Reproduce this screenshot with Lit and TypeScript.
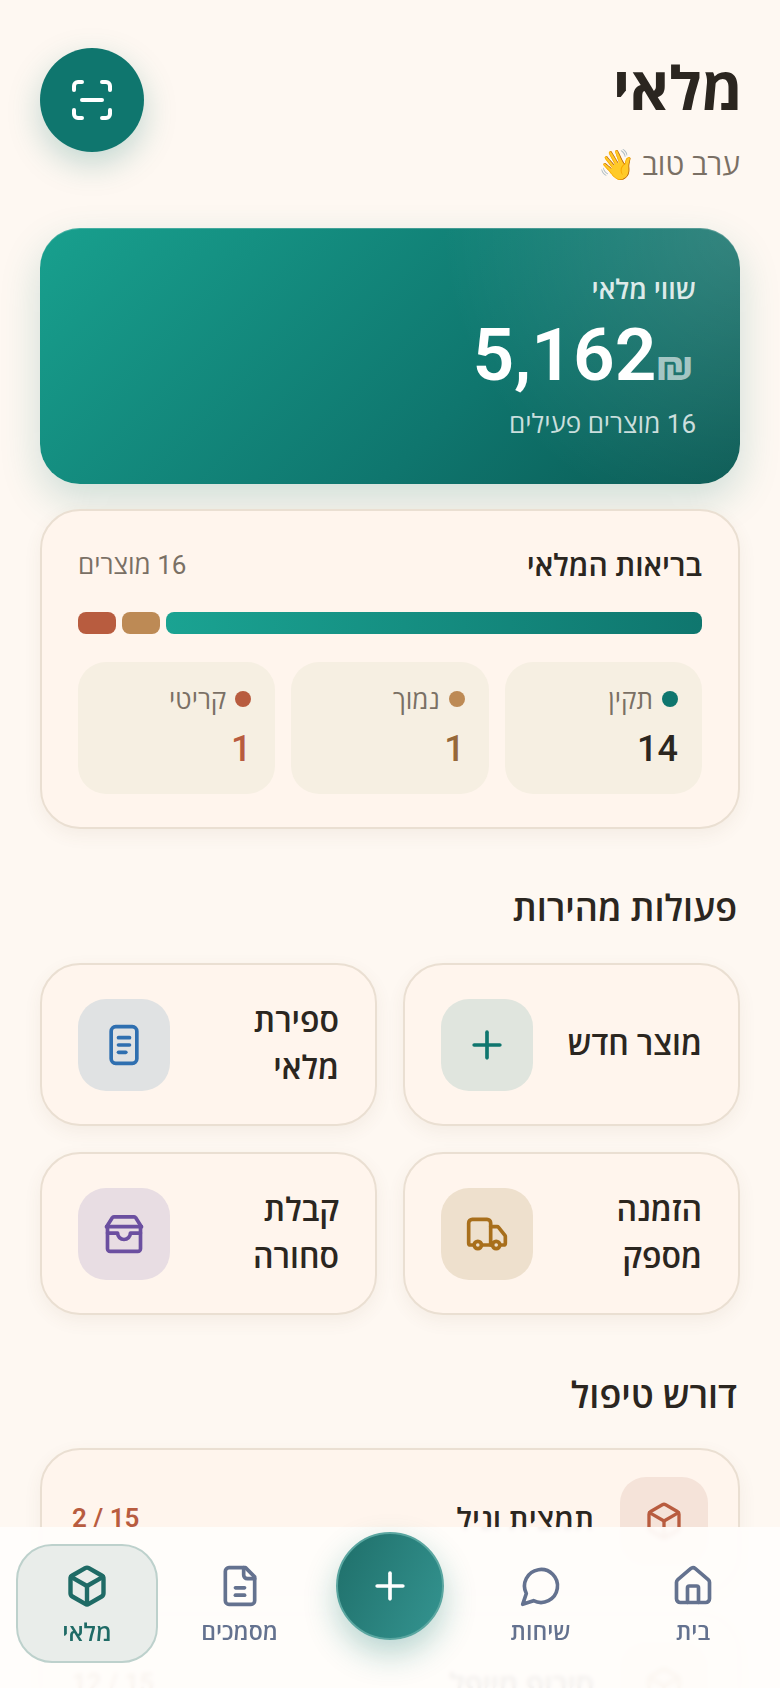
import { LitElement, html, css, svg } from "lit";
import { customElement } from "lit/decorators.js";

const icon = (body: unknown, size = 44, sw = 2) => html`<svg
  width=${size}
  height=${size}
  viewBox="0 0 24 24"
  fill="none"
  stroke="currentColor"
  stroke-width=${sw}
  stroke-linecap="round"
  stroke-linejoin="round"
>
  ${body}
</svg>`;

const paths = {
  scan: svg`<path d="M3 7V5a2 2 0 0 1 2-2h2"/><path d="M17 3h2a2 2 0 0 1 2 2v2"/><path d="M21 17v2a2 2 0 0 1-2 2h-2"/><path d="M7 21H5a2 2 0 0 1-2-2v-2"/><path d="M7 12h10"/>`,
  plus: svg`<path d="M5 12h14"/><path d="M12 5v14"/>`,
  list: svg`<rect x="5" y="2" width="14" height="20" rx="2.5"/><path d="M9 8h6"/><path d="M9 12h6"/><path d="M9 16h4"/>`,
  truck: svg`<path d="M14 18V6a2 2 0 0 0-2-2H4a2 2 0 0 0-2 2v11a1 1 0 0 0 1 1h2"/><path d="M15 18H9"/><path d="M19 18h2a1 1 0 0 0 1-1v-3.65a1 1 0 0 0-.22-.624l-3.48-4.35A1 1 0 0 0 17.52 8H14"/><circle cx="17" cy="18" r="2"/><circle cx="7" cy="18" r="2"/>`,
  inbox: svg`<path d="M2.5 8 5.6 3.2A1 1 0 0 1 6.5 2.7h11a1 1 0 0 1 .9.5L21.5 8"/><path d="M2.5 8h19"/><path d="M3 8v12a1.5 1.5 0 0 0 1.5 1.5h15A1.5 1.5 0 0 0 21 20V8"/><path d="M3 11.5h5.5a3.5 3.5 0 0 0 7 0H21"/>`,
  box: svg`<path d="M21 8a2 2 0 0 0-1-1.73l-7-4a2 2 0 0 0-2 0l-7 4A2 2 0 0 0 3 8v8a2 2 0 0 0 1 1.73l7 4a2 2 0 0 0 2 0l7-4A2 2 0 0 0 21 16Z"/><path d="m3.3 7 8.7 5 8.7-5"/><path d="M12 22V12"/>`,
  home: svg`<path d="M15 21v-8a1 1 0 0 0-1-1h-4a1 1 0 0 0-1 1v8"/><path d="M3 10a2 2 0 0 1 .709-1.528l7-6a2 2 0 0 1 2.582 0l7 6A2 2 0 0 1 21 10v9a2 2 0 0 1-2 2H5a2 2 0 0 1-2-2z"/>`,
  chat: svg`<path d="M7.9 20A9 9 0 1 0 4 16.1L2 22Z"/>`,
  file: svg`<path d="M15 2H6a2 2 0 0 0-2 2v16a2 2 0 0 0 2 2h12a2 2 0 0 0 2-2V7Z"/><path d="M14 2v4a2 2 0 0 0 2 2h4"/><path d="M9.5 13h5"/><path d="M9.5 17h5"/>`,
};

const stats = [
  { label: "תקין", value: "14", kind: "ok" },
  { label: "נמוך", value: "1", kind: "low" },
  { label: "קריטי", value: "1", kind: "crit" },
];

const actions = [
  { label: "מוצר חדש", icon: paths.plus, kind: "teal" },
  { label: "ספירת מלאי", icon: paths.list, kind: "blue" },
  { label: "הזמנה מספק", icon: paths.truck, kind: "amber" },
  { label: "קבלת סחורה", icon: paths.inbox, kind: "purple" },
];

const alerts = [
  { name: "תמצית וניל", stock: "2 / 15", kind: "crit" },
  { name: "סירופ מייפל", stock: "12 / 15", kind: "low" },
];

const tabs = [
  { label: "מלאי", icon: paths.box, active: true },
  { label: "מסמכים", icon: paths.file },
  { fab: true },
  { label: "שיחות", icon: paths.chat },
  { label: "בית", icon: paths.home },
];

@customElement("app-root")
export class AppRoot extends LitElement {
  static styles = css`
    :host {
      display: block;
      position: relative;
      height: 1688px;
      overflow: hidden;
      direction: rtl;
      background: #fef8f2;
      color: #2b2620;
      font-family: "Roboto", "Open Sans", "Noto Sans", "Liberation Sans", sans-serif;
    }

    .page {
      padding: 48px 40px 0;
    }

    /* Header */

    .header {
      display: flex;
      justify-content: space-between;
      align-items: flex-start;
    }

    .title {
      margin: 0 -3px 0 0;
      font-size: 60px;
      line-height: 84px;
      font-weight: 700;
    }

    .greeting {
      margin: 12px 0 0;
      font-size: 30px;
      line-height: 42px;
      color: #7a7065;
    }

    .scan {
      width: 104px;
      height: 104px;
      border-radius: 50%;
      background: #0f766e;
      color: #fff;
      display: flex;
      align-items: center;
      justify-content: center;
      box-shadow: 0 12px 32px rgba(15, 118, 110, 0.25);
    }

    /* Value card */

    .hero {
      margin-top: 42px;
      height: 256px;
      box-sizing: border-box;
      padding: 44px 44px 0;
      border-radius: 40px;
      color: #fff;
      background: radial-gradient(circle at 100% 0, rgba(255, 255, 255, 0.16), rgba(255, 255, 255, 0) 40%),
        linear-gradient(135deg, #18a08e 0%, #0f766e 62%, #0a5a54 100%);
      box-shadow: 0 16px 40px rgba(15, 118, 110, 0.2), inset 0 1px 0 rgba(255, 255, 255, 0.2);
    }

    .hero__label {
      font-size: 27px;
      line-height: 36px;
      font-weight: 600;
      color: rgba(255, 255, 255, 0.85);
    }

    .hero__amount {
      display: flex;
      align-items: baseline;
      margin-top: 9px;
      height: 76px;
      line-height: 76px;
    }

    .hero__number {
      font-size: 73px;
      font-weight: 600;
    }

    .hero__currency {
      margin-right: 3px;
      font-size: 42px;
      font-weight: 700;
      color: rgba(255, 255, 255, 0.6);
    }

    .hero__sub {
      margin-top: 13px;
      font-size: 26px;
      line-height: 36px;
      color: rgba(255, 255, 255, 0.78);
    }

    /* Shared card */

    .card {
      background: #fff5ed;
      border: 2px solid #eadfd2;
      box-sizing: border-box;
      box-shadow: 0 6px 18px rgba(120, 90, 60, 0.07);
    }

    /* Health */

    .health {
      margin-top: 25px;
      height: 320px;
      padding: 36px 36px 0;
      border-radius: 40px;
    }

    .health__head {
      display: flex;
      justify-content: space-between;
      align-items: center;
      height: 34px;
    }

    .health__title {
      font-size: 30px;
      font-weight: 600;
    }

    .health__count {
      font-size: 26px;
      color: #7a7065;
    }

    .bar {
      display: flex;
      gap: 6px;
      margin-top: 31px;
      height: 22px;
    }

    .bar__seg {
      border-radius: 8px;
    }

    .bar__seg--ok {
      flex: 1;
      background: linear-gradient(90deg, #1aa392, #0f766e);
    }

    .bar__seg--low {
      width: 38px;
      background: #bd8a55;
    }

    .bar__seg--crit {
      width: 38px;
      background: #b85c3f;
    }

    .stats {
      display: grid;
      grid-template-columns: repeat(3, 1fr);
      gap: 16px;
      margin-top: 28px;
    }

    .stat {
      height: 132px;
      box-sizing: border-box;
      padding: 20px 24px 0;
      border-radius: 28px;
      background: #f6efe2;
    }

    .stat__label {
      display: flex;
      align-items: center;
      gap: 9px;
      height: 34px;
      font-size: 26px;
      color: #7a7065;
    }

    .dot {
      width: 16px;
      height: 16px;
      border-radius: 50%;
    }

    .dot--ok {
      background: #0f766e;
    }

    .dot--low {
      background: #bd8a55;
    }

    .dot--crit {
      background: #b85c3f;
    }

    .stat__value {
      margin-top: 8px;
      font-size: 36px;
      line-height: 50px;
      font-weight: 500;
    }

    .stat__value--low {
      color: #96683a;
    }

    .stat__value--crit {
      color: #b85c3f;
    }

    /* Sections */

    .section-title {
      margin: 57px 0 28px;
      padding: 0 3px;
      font-size: 36px;
      line-height: 48px;
      font-weight: 600;
    }

    .section-title--first {
      margin: 56px 0 30px;
    }

    .actions {
      display: grid;
      grid-template-columns: 337px 337px;
      justify-content: space-between;
      gap: 26px;
    }

    .action {
      display: flex;
      align-items: center;
      justify-content: space-between;
      gap: 24px;
      height: 163px;
      padding: 0 36px;
      border-radius: 40px;
    }

    .action__label {
      font-size: 32px;
      line-height: 47px;
      font-weight: 600;
    }

    .action__icon {
      flex: none;
      width: 92px;
      height: 92px;
      border-radius: 28px;
      display: flex;
      align-items: center;
      justify-content: center;
    }

    .action__icon--teal {
      background: #e0e5de;
      color: #0f766e;
    }

    .action__icon--blue {
      background: #e0e2e3;
      color: #2f6fb0;
    }

    .action__icon--amber {
      background: #eee0cd;
      color: #a86f1c;
    }

    .action__icon--purple {
      background: #e8dde3;
      color: #6b4fa0;
    }

    .alerts {
      display: flex;
      flex-direction: column;
      gap: 20px;
    }

    .alert {
      display: flex;
      align-items: center;
      gap: 26px;
      height: 145px;
      padding: 0 30px;
      border-radius: 40px;
    }

    .alert__icon {
      flex: none;
      width: 88px;
      height: 88px;
      border-radius: 26px;
      display: flex;
      align-items: center;
      justify-content: center;
    }

    .alert__icon--crit {
      background: #f5e3d9;
      color: #b85c3f;
    }

    .alert__icon--low {
      background: #f3e8d9;
      color: #bd8a55;
    }

    .alert__name {
      flex: 1;
      margin-bottom: 5px;
      font-size: 30px;
      font-weight: 600;
    }

    .alert__stock {
      margin-bottom: 5px;
      direction: ltr;
      font-size: 26px;
      font-weight: 600;
    }

    .alert__stock--crit {
      color: #b85c3f;
    }

    .alert__stock--low {
      color: #96683a;
    }

    /* Bottom nav */

    .nav {
      position: absolute;
      left: 0;
      right: 0;
      bottom: 0;
      height: 161px;
      box-sizing: border-box;
      padding: 17px 16px 0;
      display: grid;
      grid-template-columns: 142px 142px 138px 142px 142px;
      justify-content: space-between;
      align-items: start;
      direction: ltr;
      background: rgba(255, 253, 251, 0.94);
      backdrop-filter: blur(2px);
    }

    .tab {
      height: 119px;
      box-sizing: border-box;
      border: 2px solid transparent;
      border-radius: 36px;
      display: flex;
      flex-direction: column;
      align-items: center;
      padding-top: 18px;
      gap: 8px;
      color: #64728f;
      font-size: 23px;
      line-height: 34px;
      font-weight: 600;
    }

    .tab--active {
      color: #1f6b66;
      background: #e9edea;
      border-color: #bdd1cc;
      font-size: 24px;
    }

    .fab-wrap {
      display: flex;
      justify-content: center;
      margin-top: -12px;
    }

    .fab {
      width: 108px;
      height: 108px;
      box-sizing: border-box;
      border: 2px solid #5aa6a0;
      border-radius: 50%;
      color: #fff;
      display: flex;
      align-items: center;
      justify-content: center;
      background: linear-gradient(115deg, #1f6f6a, #349490);
      box-shadow: 0 14px 32px rgba(15, 118, 110, 0.3);
    }
  `;

  render() {
    return html`
      <div class="page">
        <header class="header">
          <div>
            <h1 class="title">מלאי</h1>
            <p class="greeting">ערב טוב 👋</p>
          </div>
          <div class="scan">${icon(paths.scan, 48, 2)}</div>
        </header>

        <section class="hero">
          <div class="hero__label">שווי מלאי</div>
          <div class="hero__amount">
            <span class="hero__currency">₪</span>
            <span class="hero__number">5,162</span>
          </div>
          <div class="hero__sub">16 מוצרים פעילים</div>
        </section>

        <section class="card health">
          <div class="health__head">
            <span class="health__title">בריאות המלאי</span>
            <span class="health__count">16 מוצרים</span>
          </div>
          <div class="bar">
            <div class="bar__seg bar__seg--ok"></div>
            <div class="bar__seg bar__seg--low"></div>
            <div class="bar__seg bar__seg--crit"></div>
          </div>
          <div class="stats">
            ${stats.map(
              (s) => html`<div class="stat">
                <div class="stat__label"><span class="dot dot--${s.kind}"></span>${s.label}</div>
                <div class="stat__value stat__value--${s.kind}">${s.value}</div>
              </div>`
            )}
          </div>
        </section>

        <h2 class="section-title section-title--first">פעולות מהירות</h2>
        <div class="actions">
          ${actions.map(
            (a) => html`<div class="card action">
              <span class="action__label">${a.label}</span>
              <span class="action__icon action__icon--${a.kind}">${icon(a.icon, 44, 2)}</span>
            </div>`
          )}
        </div>

        <h2 class="section-title">דורש טיפול</h2>
        <div class="alerts">
          ${alerts.map(
            (a) => html`<div class="card alert">
              <span class="alert__icon alert__icon--${a.kind}">${icon(paths.box, 40, 2)}</span>
              <span class="alert__name">${a.name}</span>
              <span class="alert__stock alert__stock--${a.kind}">${a.stock}</span>
            </div>`
          )}
        </div>
      </div>

      <nav class="nav">
        ${tabs.map((t) =>
          t.fab
            ? html`<div class="fab-wrap"><div class="fab">${icon(paths.plus, 44, 2)}</div></div>`
            : html`<div class="tab ${t.active ? "tab--active" : ""}">
                ${icon(t.icon, 44, t.active ? 2.4 : 2)}<span>${t.label}</span>
              </div>`
        )}
      </nav>
    `;
  }
}
